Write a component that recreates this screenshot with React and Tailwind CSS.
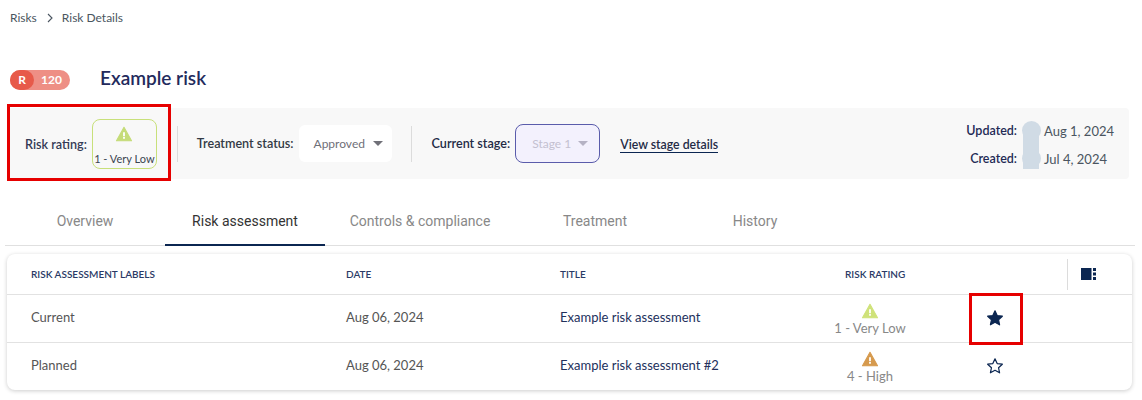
function WarnIcon({ color, size = 18 }) {
  return (
    <svg width={size} height={size} viewBox="0 0 24 24" className="block">
      <path fill={color} stroke={color} strokeWidth="1.5" strokeLinejoin="round" d="M2 21h20L12 3 2 21z" />
      <path fill="#fff" d="M10.8 9.5h2.4v5.5h-2.4zM10.8 16h2.4v2.4h-2.4z" />
    </svg>
  );
}

function Caret({ color }) {
  return (
    <svg width="10" height="5" viewBox="0 0 10 5" className="block">
      <path d="M0 0h10L5 5z" fill={color} />
    </svg>
  );
}

function StarIcon({ filled }) {
  return (
    <svg width="18" height="18" viewBox="0 0 24 24" className="block">
      <path
        d="M12 2.5l2.9 6.3 6.9.8-5.1 4.7 1.4 6.8-6.1-3.4-6.1 3.4 1.4-6.8L2.2 9.6l6.9-.8z"
        fill={filled ? '#0b2651' : 'none'}
        stroke="#0b2651"
        strokeWidth="1.6"
        strokeLinejoin="round"
      />
    </svg>
  );
}

function Row({ label, title, color, rating, filled }) {
  return (
    <div className="grid grid-cols-[315px_214px_244px_180px_70px_1fr] items-center h-[48px] pb-[2px] border-t border-[#e2e2e2] text-[13px] text-[#555]">
      <div className="pl-6">{label}</div>
      <div className="pl-6">Aug 06, 2024</div>
      <div className="pl-6 text-[#22305c]">{title}</div>
      <div className="flex flex-col items-center text-[#888] leading-[16px] pt-[2px]">
        <WarnIcon color={color} />
        <span>{rating}</span>
      </div>
      <div className="flex justify-center">
        <StarIcon filled={filled} />
      </div>
      <div />
    </div>
  );
}

export default function App() {
  return (
    <div className="relative w-[1142px] h-[400px] overflow-hidden bg-white font-['Lato',sans-serif]">
      {/* Breadcrumb */}
      <div className="flex items-center h-[18px] mt-[9px] pl-[10px] text-xs text-[#4a5560]">
        <span>Risks</span>
        <svg width="8" height="10" viewBox="0 0 8 10" className="ml-[9px] mr-[8px]">
          <path d="M2 1l4 4-4 4" fill="none" stroke="#4a5560" strokeWidth="1.1" />
        </svg>
        <span>Risk Details</span>
      </div>

      {/* Title */}
      <div className="flex items-center h-[24px] mt-[41px] pl-[10px]">
        <div className="flex items-center w-[60px] h-[20px] rounded-full bg-[#ee8f85] text-xs font-bold text-white">
          <span className="flex items-center justify-center w-6 h-[20px] rounded-full bg-[#e75a4a]">R</span>
          <span className="pl-[7px]">120</span>
        </div>
        <h1 className="ml-[30px] mb-[4px] text-[19px] font-semibold text-[#232a5c]">Example risk</h1>
      </div>

      {/* Status bar */}
      <div className="relative flex items-center h-[71px] mt-[16px] ml-[8px] w-[1121px] rounded bg-[#f8f8f8] text-[12.6px]">
        <span className="ml-[17px] mt-[3px] font-semibold text-[#333a55]">Risk rating:</span>
        <div className="flex flex-col items-center justify-between ml-[5px] w-[65px] h-[50px] pt-[5px] pb-[3px] rounded-lg border border-[#c8e07a] text-[11px] leading-[13px] text-[#3a4450]">
          <WarnIcon color="#c5dc78" />
          <span>1 - Very Low</span>
        </div>
        <div className="ml-[20px] w-px h-[36px] bg-[#dcdcdc]" />
        <span className="ml-[19px] mt-[2px] font-semibold text-[#333a45]">Treatment status:</span>
        <div className="flex items-center justify-between ml-[5px] w-[93px] h-[37px] pl-[15px] pr-[9px] rounded-md bg-white text-xs text-[#6f6f78]">
          <span>Approved</span>
          <Caret color="#707078" />
        </div>
        <div className="ml-[19px] w-px h-[36px] bg-[#dcdcdc]" />
        <span className="ml-[20px] mt-[2px] font-semibold text-[#232a45]">Current stage:</span>
        <div className="flex items-center justify-between ml-[5px] w-[85px] h-[39px] pl-[16px] pr-[11px] rounded-lg border border-[#5a5cab] bg-[#f3f1fd] text-xs text-[#c3c0d0]">
          <span>Stage 1</span>
          <Caret color="#b5b2c4" />
        </div>
        <span className="ml-[20px] mt-[4px] font-semibold text-[12.3px] text-[#232a45] border-b border-[#0b2651] leading-[14px]">
          View stage details
        </span>
        <div className="ml-auto mr-[15px] mt-[2px] grid grid-cols-[auto_auto] gap-x-[27px] gap-y-[12px] text-[13px] leading-[16px]">
          <span className="text-right text-[12.5px] font-semibold text-[#232a55]">Updated:</span>
          <span className="text-[#4a5560]">Aug 1, 2024</span>
          <span className="text-right text-[12.5px] font-semibold text-[#232a55]">Created:</span>
          <span className="text-[#4a5560]">Jul 4, 2024</span>
        </div>
        {/* blurred avatars */}
        <div className="absolute left-[1015px] top-[20px] w-[16px] h-[41px] bg-[#d0dbe5]" />
        <div className="absolute left-[1014px] top-[13px] w-[19px] h-[19px] rounded-full bg-[#d0dbe5]" />
        <div className="absolute left-[1014px] top-[41px] w-[19px] h-[19px] rounded-full bg-[#d0dbe5]" />
      </div>

      {/* Tabs */}
      <div className="flex items-stretch h-[47px] mt-[20px] ml-[5px] w-[1130px] border-b border-[#e0e0e0] font-['Roboto',sans-serif] text-sm text-[#888]">
        <div className="flex items-center justify-center w-[160px] pb-[3px]">Overview</div>
        <div className="flex items-center justify-center w-[160px] pb-[1px] text-[#333] border-b-2 border-[#0b2651] -mb-px">Risk assessment</div>
        <div className="flex items-center justify-center w-[190px] pb-[3px]">Controls &amp; compliance</div>
        <div className="flex items-center justify-center w-[160px] pb-[3px]">Treatment</div>
        <div className="flex items-center justify-center w-[160px] pb-[3px]">History</div>
      </div>

      {/* Table */}
      <div className="mt-[8px] ml-[7px] w-[1125px] rounded-lg bg-white shadow-[0_1px_4px_rgba(0,0,0,0.2)]">
        <div className="grid grid-cols-[315px_214px_244px_180px_70px_1fr] items-center h-[40px] text-[10px] font-semibold text-[#2a3a66]">
          <div className="pl-6">RISK ASSESSMENT LABELS</div>
          <div className="pl-6">DATE</div>
          <div className="pl-6">TITLE</div>
          <div className="pl-[65px]">RISK RATING</div>
          <div />
          <div className="flex items-center h-[31px] ml-[37px] pl-[13px] border-l border-[#dcdcdc]">
            <svg width="15" height="12" viewBox="0 0 15 12" className="block">
              <path d="M0 0h10.5v12H0zM12 0h3v3h-3zM12 4.5h3v3h-3zM12 9h3v3h-3z" fill="#0b2651" />
            </svg>
          </div>
        </div>
        <Row label="Current" title="Example risk assessment" color="#cfe27a" rating="1 - Very Low" filled />
        <Row label="Planned" title="Example risk assessment #2" color="#d69a4e" rating="4 - High" />
      </div>

      {/* Red annotation boxes */}
      <div className="absolute left-[7px] top-[104px] w-[164px] h-[77px] border-[3px] border-[#e60000]" />
      <div className="absolute left-[969px] top-[293px] w-[54px] h-[52px] border-[3px] border-[#e60000]" />
    </div>
  );
}
